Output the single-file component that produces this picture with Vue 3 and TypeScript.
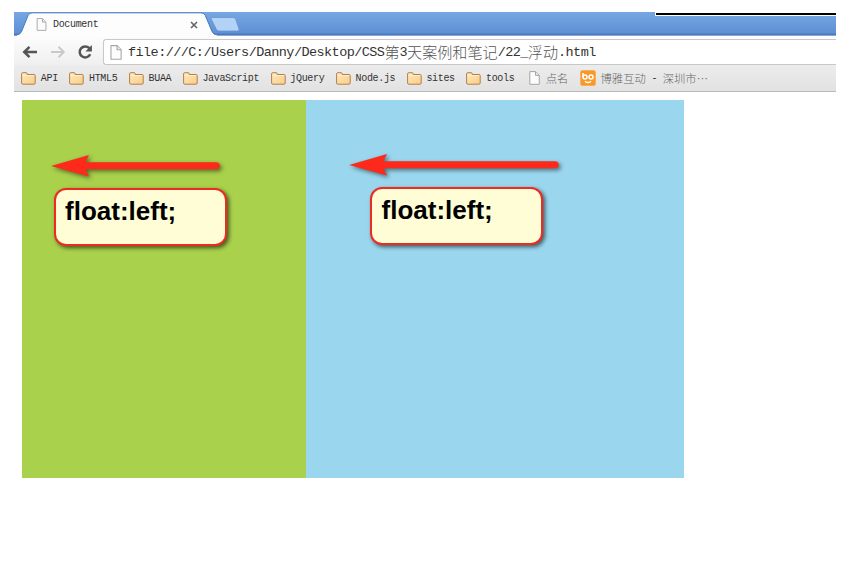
<script setup lang="ts">
interface Part {
  text: string
  cjk?: boolean
}
interface Bookmark {
  icon: 'folder' | 'page' | 'boya'
  parts: Part[]
}

const folders: string[] = ['API', 'HTML5', 'BUAA', 'JavaScript', 'jQuery', 'Node.js', 'sites', 'tools']
const bookmarks: Bookmark[] = [
  ...folders.map((text): Bookmark => ({ icon: 'folder', parts: [{ text }] })),
  { icon: 'page', parts: [{ text: '点名', cjk: true }] },
  {
    icon: 'boya',
    parts: [{ text: '博雅互动', cjk: true }, { text: ' - ' }, { text: '深圳市⋯', cjk: true }],
  },
]
const address: Part[] = [
  { text: 'file:///C:/Users/Danny/Desktop/CSS' },
  { text: '第', cjk: true },
  { text: '3' },
  { text: '天案例和笔记', cjk: true },
  { text: '/22_' },
  { text: '浮动', cjk: true },
  { text: '.html' },
]
</script>

<template>
  <div class="window">
    <svg class="defs" width="0" height="0">
      <defs>
        <linearGradient id="folderFill" x1="0" y1="0" x2="1" y2="1">
          <stop offset="0" stop-color="#ffe9bd" />
          <stop offset="1" stop-color="#fbcd86" />
        </linearGradient>
        <symbol id="page" viewBox="0 0 11 14">
          <path d="M.8.6H6.6L10.3 4.3V13.3H.8Z" fill="#fcfcfc" stroke="#a5a5a5" />
          <path d="M6.5.8V4.4H10.2" fill="#eee" stroke="#a5a5a5" />
        </symbol>
      </defs>
    </svg>

    <header class="strip">
      <svg class="tab-shape" width="240" height="24" viewBox="0 0 240 24">
        <path d="M3 24V22.8Q6.500 22.500 7.800 19L14 3.500Q15.300 .8 18 .8H187Q190 .8 191.300 3.500L198 19.500Q199.500 22.800 203 22.800V24Z" fill="#fdfdfe" />
        <path d="M0 22.800H3Q6.500 22.500 7.800 19L14 3.500Q15.300 .8 18 .8H187Q190 .8 191.300 3.500L198 19.500Q199.500 22.800 203 22.800" fill="none" stroke="#4a79bd" />
        <path d="M198 5.500H219Q221 5.500 221.800 7.500L225 17Q225.500 19 223.500 19H205Q203 19 202.200 17L197.500 7.500Q197 5.500 198 5.500Z" fill="#b2d3f6" stroke="#6594d2" stroke-width=".8" />
      </svg>
      <div class="tab">
        <svg class="tab-page" width="11" height="13"><use href="#page" /></svg>
        <span class="mono">Document</span>
        <svg class="close" width="8" height="8" viewBox="0 0 8 8"><path d="M1 1L7 7M7 1L1 7" stroke="#666" stroke-width="1.600" /></svg>
      </div>
      <div class="edge"></div>
    </header>

    <nav class="toolbar">
      <svg class="back" width="16" height="14" viewBox="0 0 16 14"><path d="M15 7H2.500M7.500 1.800L2.200 7L7.500 12.200" fill="none" stroke="#555" stroke-width="2.500" /></svg>
      <svg class="forward" width="16" height="14" viewBox="0 0 16 14"><path d="M1 7H13.500M8.500 1.800L13.800 7L8.500 12.200" fill="none" stroke="#c9c9c9" stroke-width="1.900" /></svg>
      <svg class="reload" width="16" height="16" viewBox="0 0 16 16">
        <path d="M12.300 4.200A5.500 5.500 0 1 0 13.200 10.200" fill="none" stroke="#555" stroke-width="2.500" />
        <path d="M14.900 1V7.500H8.400Z" fill="#555" />
      </svg>
      <div class="address">
        <svg class="address-page" width="12" height="15"><use href="#page" /></svg>
        <div class="url"><span v-for="(p, i) in address" :key="i" :class="p.cjk ? 'url-cjk' : 'url-mono'">{{ p.text }}</span></div>
      </div>
    </nav>

    <div class="bookmarks">
      <div v-for="(b, i) in bookmarks" :key="i" class="bookmark">
        <svg v-if="b.icon === 'folder'" class="icon" width="15" height="13" viewBox="0 0 15 13">
          <path d="M.6 11V1.800Q.6.700 1.700.700H5.300Q6.200.700 6.200 1.800V2.500H13Q14.200 2.500 14.200 3.700V11Q14.200 12.200 13 12.200H1.800Q.6 12.200.6 11Z" fill="url(#folderFill)" stroke="#ad8052" />
          <path d="M1.500 3.500H13.200" stroke="#fff3d8" stroke-width=".8" />
        </svg>
        <svg v-else-if="b.icon === 'page'" class="icon page-icon" width="11" height="14"><use href="#page" /></svg>
        <svg v-else class="icon boya-icon" width="16" height="16" viewBox="0 0 16 16">
          <rect x=".3" y=".3" width="15.400" height="15.400" rx="2" fill="#fa9828" />
          <path d="M3 3V7" stroke="#fff" stroke-width="1.600" />
          <circle cx="5" cy="7" r="2" fill="none" stroke="#fff" stroke-width="1.500" />
          <circle cx="11" cy="7" r="2" fill="none" stroke="#fff" stroke-width="1.500" />
          <path d="M5 11.200Q8 14 11 11.200" fill="none" stroke="#fff" stroke-width="1.400" />
        </svg>
        <div class="label"><span v-for="(p, j) in b.parts" :key="j" :class="p.cjk ? 'cjk' : 'mono'">{{ p.text }}</span></div>
      </div>
    </div>

    <main class="page">
      <section class="box green">
        <svg class="arrow" width="170" height="25" viewBox="0 0 170 25"><path d="M0 11L38 0L34.500 7.200H165A3.800 3.500 0 0 1 165 14.200H34.500L38 21.500Z" fill="#fd2a1c" /></svg>
        <div class="callout">float:left;</div>
      </section>
      <section class="box blue">
        <svg class="arrow" width="212" height="25" viewBox="0 0 212 25"><path d="M0 11L38 0L34.500 7.200H206A3.800 3.500 0 0 1 206 14.200H34.500L38 21.500Z" fill="#fd2a1c" /></svg>
        <div class="callout">float:left;</div>
      </section>
    </main>
  </div>
</template>

<style>
body {
  background: #fff;
}
</style>

<style scoped>
.window {
  box-sizing: border-box;
  width: 846px;
  height: 566px;
  padding: 12px 10px 0 14px;
  overflow: hidden;
}
.window svg {
  flex: none;
  display: block;
}
.defs {
  position: absolute;
}
.strip {
  position: relative;
  height: 24px;
  background: linear-gradient(#77a7e2, #5e90d5 21px, #4a79bd 22px, #4a79bd 23px, #8aaad5 23px);
}
.tab-shape {
  position: absolute;
  left: 0;
  top: 0;
}
.tab {
  position: relative;
  display: flex;
  align-items: center;
  box-sizing: border-box;
  width: 184px;
  height: 25px;
  padding-left: 22px;
  color: #333;
}
.tab-page {
  margin-right: 6px;
}
.close {
  margin-left: auto;
}
.edge {
  position: absolute;
  right: 0;
  top: 0;
  width: 180px;
  height: 2px;
  border: solid #fff;
  border-width: 1px 0 1px 1px;
  background: #000;
}
.mono {
  font: 10px/14px "Liberation Mono", monospace;
  letter-spacing: -0.33px;
  white-space: pre;
  padding-top: 1px;
}
.cjk {
  font: 11.3px/14px "Noto Sans CJK SC", sans-serif;
  font-weight: 300;
  color: #666;
  margin-top: -1px;
}
.toolbar {
  display: flex;
  align-items: center;
  box-sizing: border-box;
  height: 29px;
  background: linear-gradient(#fdfdfd, #efefef);
  padding: 3px 0 0 8px;
}
.back {
  margin: 0 12px 0 0;
}
.forward {
  margin: 0 11px 0 0;
}
.reload {
  margin-right: 10px;
}
.address {
  display: flex;
  align-items: center;
  box-sizing: border-box;
  flex: 1;
  height: 26px;
  border: 1px solid #c8c8c8;
  border-right: 0;
  border-radius: 3px 0 0 3px;
  background: #fff;
  padding-left: 6px;
}
.address-page {
  margin-right: 6px;
}
.url {
  display: flex;
  align-items: center;
  height: 22px;
  color: #333;
  white-space: pre;
}
.url-mono {
  font: 13.5px/20px "Liberation Mono", monospace;
  letter-spacing: -0.56px;
  padding-top: 1px;
}
.url-cjk {
  font: 300 15.1px/20px "Noto Sans CJK SC", sans-serif;
  color: #555;
  margin-top: -3px;
}
.bookmarks {
  display: flex;
  align-items: center;
  box-sizing: border-box;
  height: 27px;
  padding: 0 0 0 7px;
  gap: 11.4px;
  background: linear-gradient(#ececec, #e2e2e2);
  border-bottom: 1px solid #b9b9b9;
}
.bookmark {
  display: flex;
  align-items: center;
  flex: none;
}
.icon {
  margin-right: 4.8px;
}
.page-icon {
  margin: 0 6px 0 3px;
}
.label {
  display: flex;
  align-items: center;
  color: #333;
}
.page {
  display: flex;
  padding: 8px 0 0 8px;
}
.box {
  box-sizing: border-box;
  height: 378px;
}
.green {
  width: 283.5px;
  padding: 55px 0 0 29px;
  background: #a9d14c;
}
.blue {
  width: 378.5px;
  padding: 54px 0 0 43.5px;
  background: #9ad7ee;
}
.arrow {
  overflow: visible;
  filter: drop-shadow(2px 2px 2px rgba(0, 0, 0, 0.5));
}
.callout {
  box-sizing: border-box;
  width: 173px;
  height: 58px;
  margin: 7.5px 0 0 2.5px;
  padding: 6px 0 0 9.5px;
  border: 2px solid #ed2b1e;
  border-radius: 12px;
  background: #fffdd6;
  box-shadow: 2px 2px 4px rgba(0, 0, 0, 0.6);
  color: #000;
  font: bold 26px/30px "Liberation Sans", Arial, sans-serif;
}
.blue .callout {
  margin-left: 21px;
}
</style>
